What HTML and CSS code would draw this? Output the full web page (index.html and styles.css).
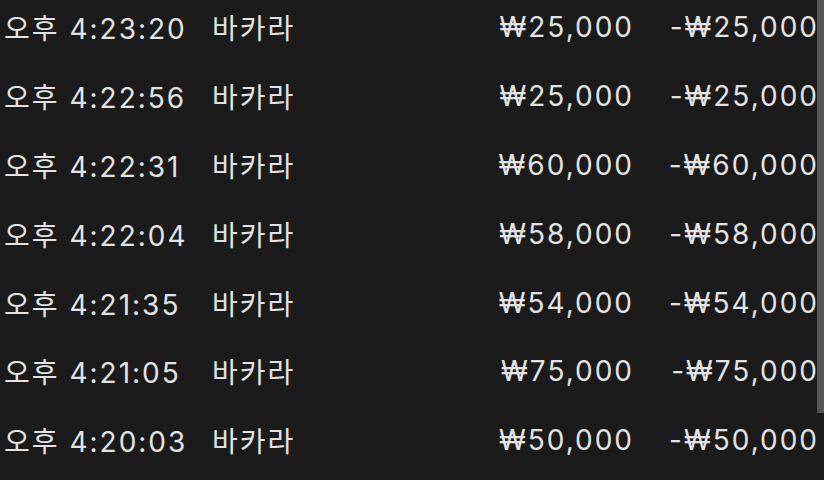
FILE: index.html
```html
<!DOCTYPE html>
<html lang="ko">
<head>
<meta charset="utf-8">
<link rel="stylesheet" href="styles.css">
</head>
<body>
<div class="list">
  <div class="row"><span class="time">오후 4:23:20</span><span class="game">바카라</span><span class="amt">₩25,000</span><span class="net">-₩25,000</span></div>
  <div class="row"><span class="time">오후 4:22:56</span><span class="game">바카라</span><span class="amt">₩25,000</span><span class="net">-₩25,000</span></div>
  <div class="row"><span class="time">오후 4:22:31</span><span class="game">바카라</span><span class="amt">₩60,000</span><span class="net">-₩60,000</span></div>
  <div class="row"><span class="time">오후 4:22:04</span><span class="game">바카라</span><span class="amt">₩58,000</span><span class="net">-₩58,000</span></div>
  <div class="row"><span class="time">오후 4:21:35</span><span class="game">바카라</span><span class="amt">₩54,000</span><span class="net">-₩54,000</span></div>
  <div class="row"><span class="time">오후 4:21:05</span><span class="game">바카라</span><span class="amt">₩75,000</span><span class="net">-₩75,000</span></div>
  <div class="row"><span class="time">오후 4:20:03</span><span class="game">바카라</span><span class="amt">₩50,000</span><span class="net">-₩50,000</span></div>
</div>
<div class="scrollbar"></div>
</body>
</html>
```
FILE: styles.css
```css
html, body {
  margin: 0;
  padding: 0;
  background: #1b1b1b;
  height: 100%;
  overflow: hidden;
}
body {
  position: relative;
  font-family: "Inter", "Noto Sans CJK KR", sans-serif;
  font-size: 28px;
  letter-spacing: 2px;
  color: #e2e2e2;
}
.list {
  display: flex;
  flex-direction: column;
  margin-top: -7px;
  padding-left: 4px;
  width: 815px;
}
.row {
  display: grid;
  grid-template-columns: 208px 220px 202px 185px;
  align-items: center;
  height: 68.8px;
  white-space: nowrap;
}
.amt, .net {
  text-align: right;
}
.scrollbar {
  position: absolute;
  top: 0;
  right: 0;
  width: 7px;
  height: 413px;
  background: #555;
}
```
